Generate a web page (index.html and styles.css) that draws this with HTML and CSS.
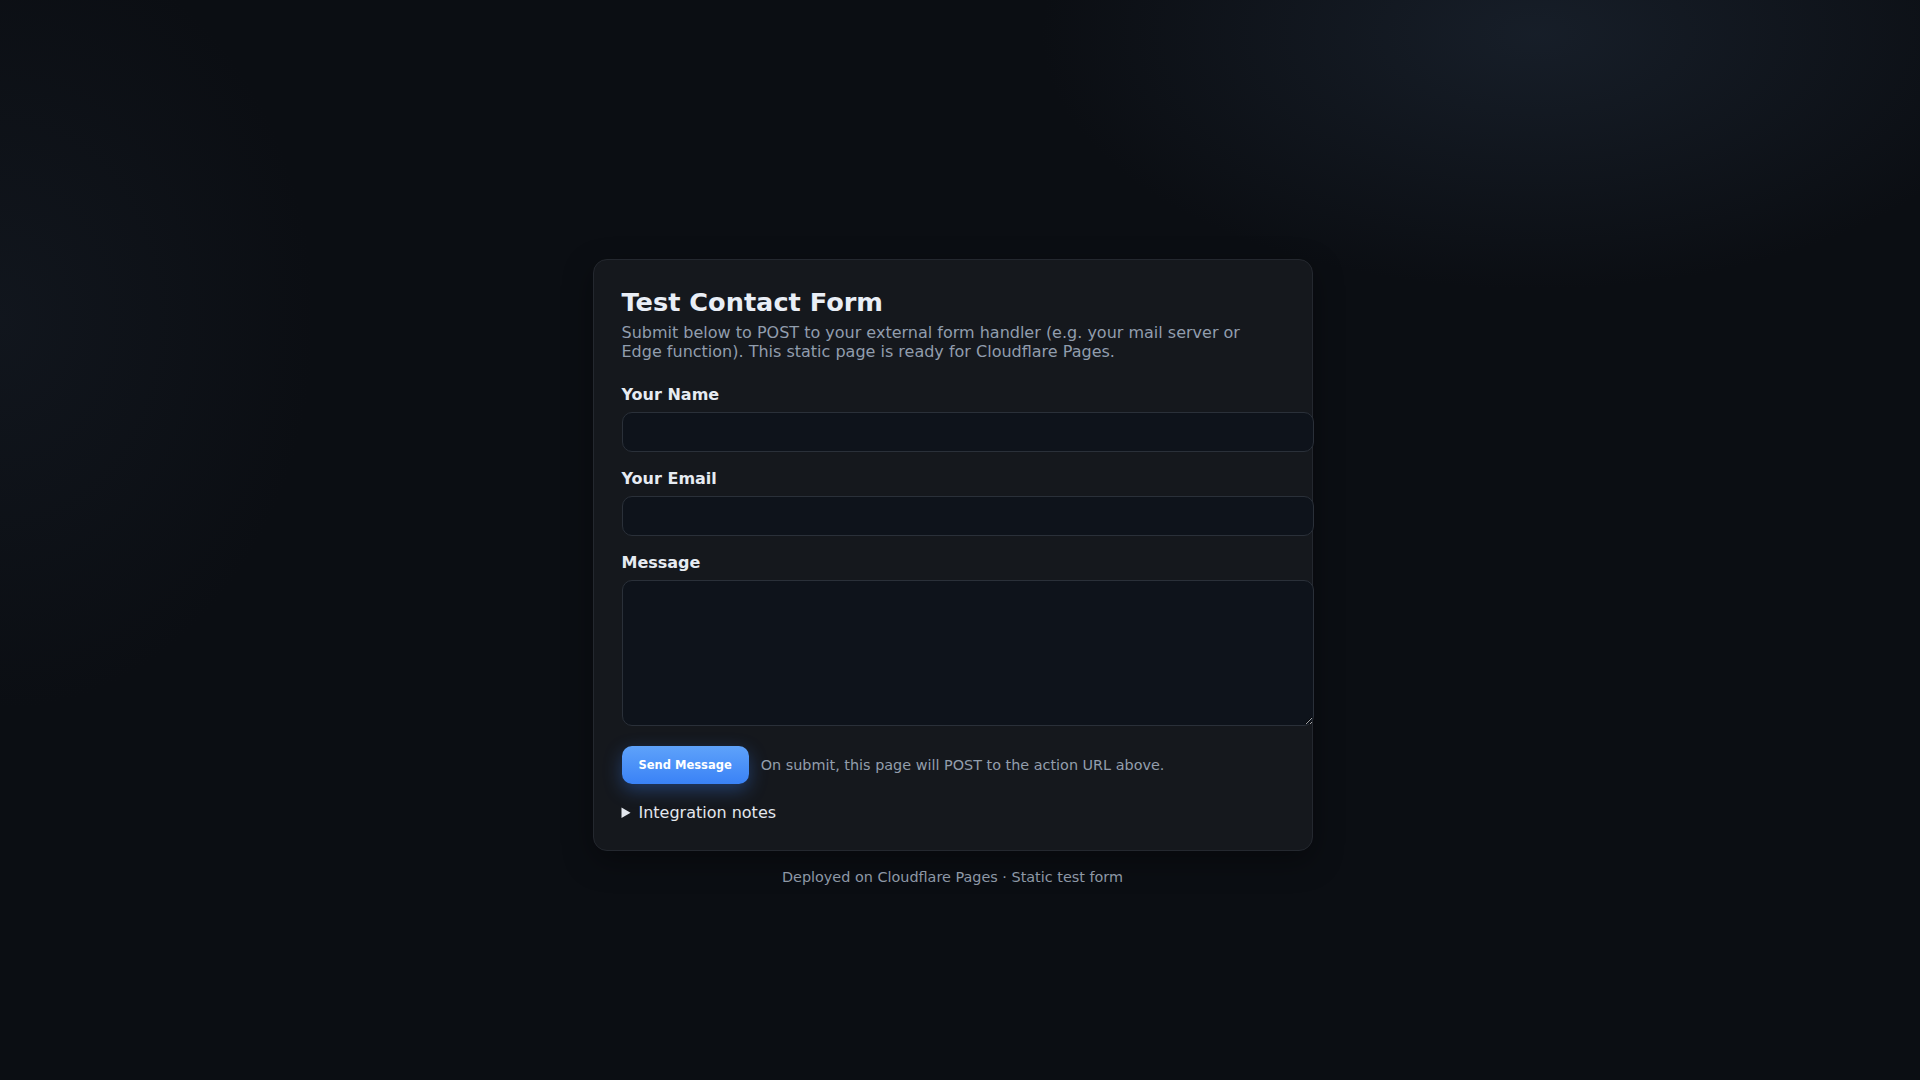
FILE: index.html
```html
<!DOCTYPE html>
<html lang="en">
<head>
<meta charset="utf-8">
<title>Test Contact Form</title>
<link rel="stylesheet" href="styles.css">
</head>
<body>
<main class="wrap">
  <section class="card">
    <h1 class="title">Test Contact Form</h1>
    <p class="sub">Submit below to POST to your external form handler (e.g. your mail server or Edge function). This static page is ready for Cloudflare Pages.</p>
    <form class="form" action="#" method="post">
      <label class="label" for="name">Your Name</label>
      <input class="input" id="name" name="name" type="text">
      <label class="label" for="email">Your Email</label>
      <input class="input" id="email" name="email" type="email">
      <label class="label" for="message">Message</label>
      <textarea class="input area" id="message" name="message"></textarea>
      <div class="actions">
        <button class="btn" type="submit">Send Message</button>
        <span class="hint">On submit, this page will POST to the action URL above.</span>
      </div>
    </form>
    <details class="notes">
      <summary class="summary">Integration notes</summary>
    </details>
  </section>
  <footer class="foot">Deployed on Cloudflare Pages · Static test form</footer>
</main>
</body>
</html>
```
FILE: styles.css
```css
html {
  background:
    radial-gradient(660px 340px at 80% 3%, rgba(32, 43, 58, 0.55), rgba(32, 43, 58, 0) 75%),
    radial-gradient(420px 520px at 0% 28%, rgba(28, 36, 48, 0.35), rgba(28, 36, 48, 0) 75%),
    #0b0e13;
}

body {
  margin: 0;
  padding: 32px 47px 32px 32px;
  min-height: 100vh;
  display: grid;
  place-items: center;
  font-family: "DejaVu Sans", Verdana, sans-serif;
  color: #e6ebf2;
}

.wrap {
  width: 720px;
}

.card {
  box-sizing: border-box;
  width: 720px;
  padding: 27px 28px 28px;
  background: #15181d;
  border: 1px solid #24282f;
  border-radius: 14px;
  box-shadow: 0 10px 30px rgba(0, 0, 0, 0.35);
}

.title {
  margin: 0 0 6px;
  font-size: 25.6px;
  font-weight: 700;
  line-height: normal;
  color: #e9eef6;
}

.sub {
  margin: 0 0 24px;
  font-size: 16px;
  line-height: normal;
  color: #919dad;
}

.form {
  margin: 0;
}

.label {
  display: block;
  margin: 0 0 8px;
  font-size: 16px;
  font-weight: 700;
  line-height: normal;
  color: #e6ebf2;
}

.input {
  display: block;
  width: 100%;
  height: 38px;
  margin: 0 0 17px;
  padding: 0 14px;
  font: inherit;
  font-size: 16px;
  color: #e6ebf2;
  background: #0e131b;
  border: 1px solid #2a3039;
  border-radius: 10px;
  outline: none;
}

.area {
  padding: 10px 14px;
  margin-bottom: 0;
  height: 124px;
  resize: vertical;
}

.actions {
  display: flex;
  align-items: center;
  gap: 12px;
  margin-top: 20px;
}

.btn {
  height: 38px;
  padding: 0 17px;
  font-family: inherit;
  font-size: 11.5px;
  font-weight: 700;
  color: #ffffff;
  background: linear-gradient(180deg, #5ea2fa 0%, #3a82f6 100%);
  border: none;
  border-radius: 10px;
  box-shadow: 0 6px 18px rgba(59, 130, 246, 0.35);
  cursor: pointer;
}

.hint {
  font-size: 14.4px;
  color: #939eac;
}

.notes {
  margin-top: 19px;
  font-size: 16px;
  color: #e3e7ee;
}

.summary {
  line-height: normal;
  cursor: pointer;
}

.foot {
  margin-top: 18px;
  text-align: center;
  font-size: 14.4px;
  line-height: normal;
  color: #8e98a6;
}
```
